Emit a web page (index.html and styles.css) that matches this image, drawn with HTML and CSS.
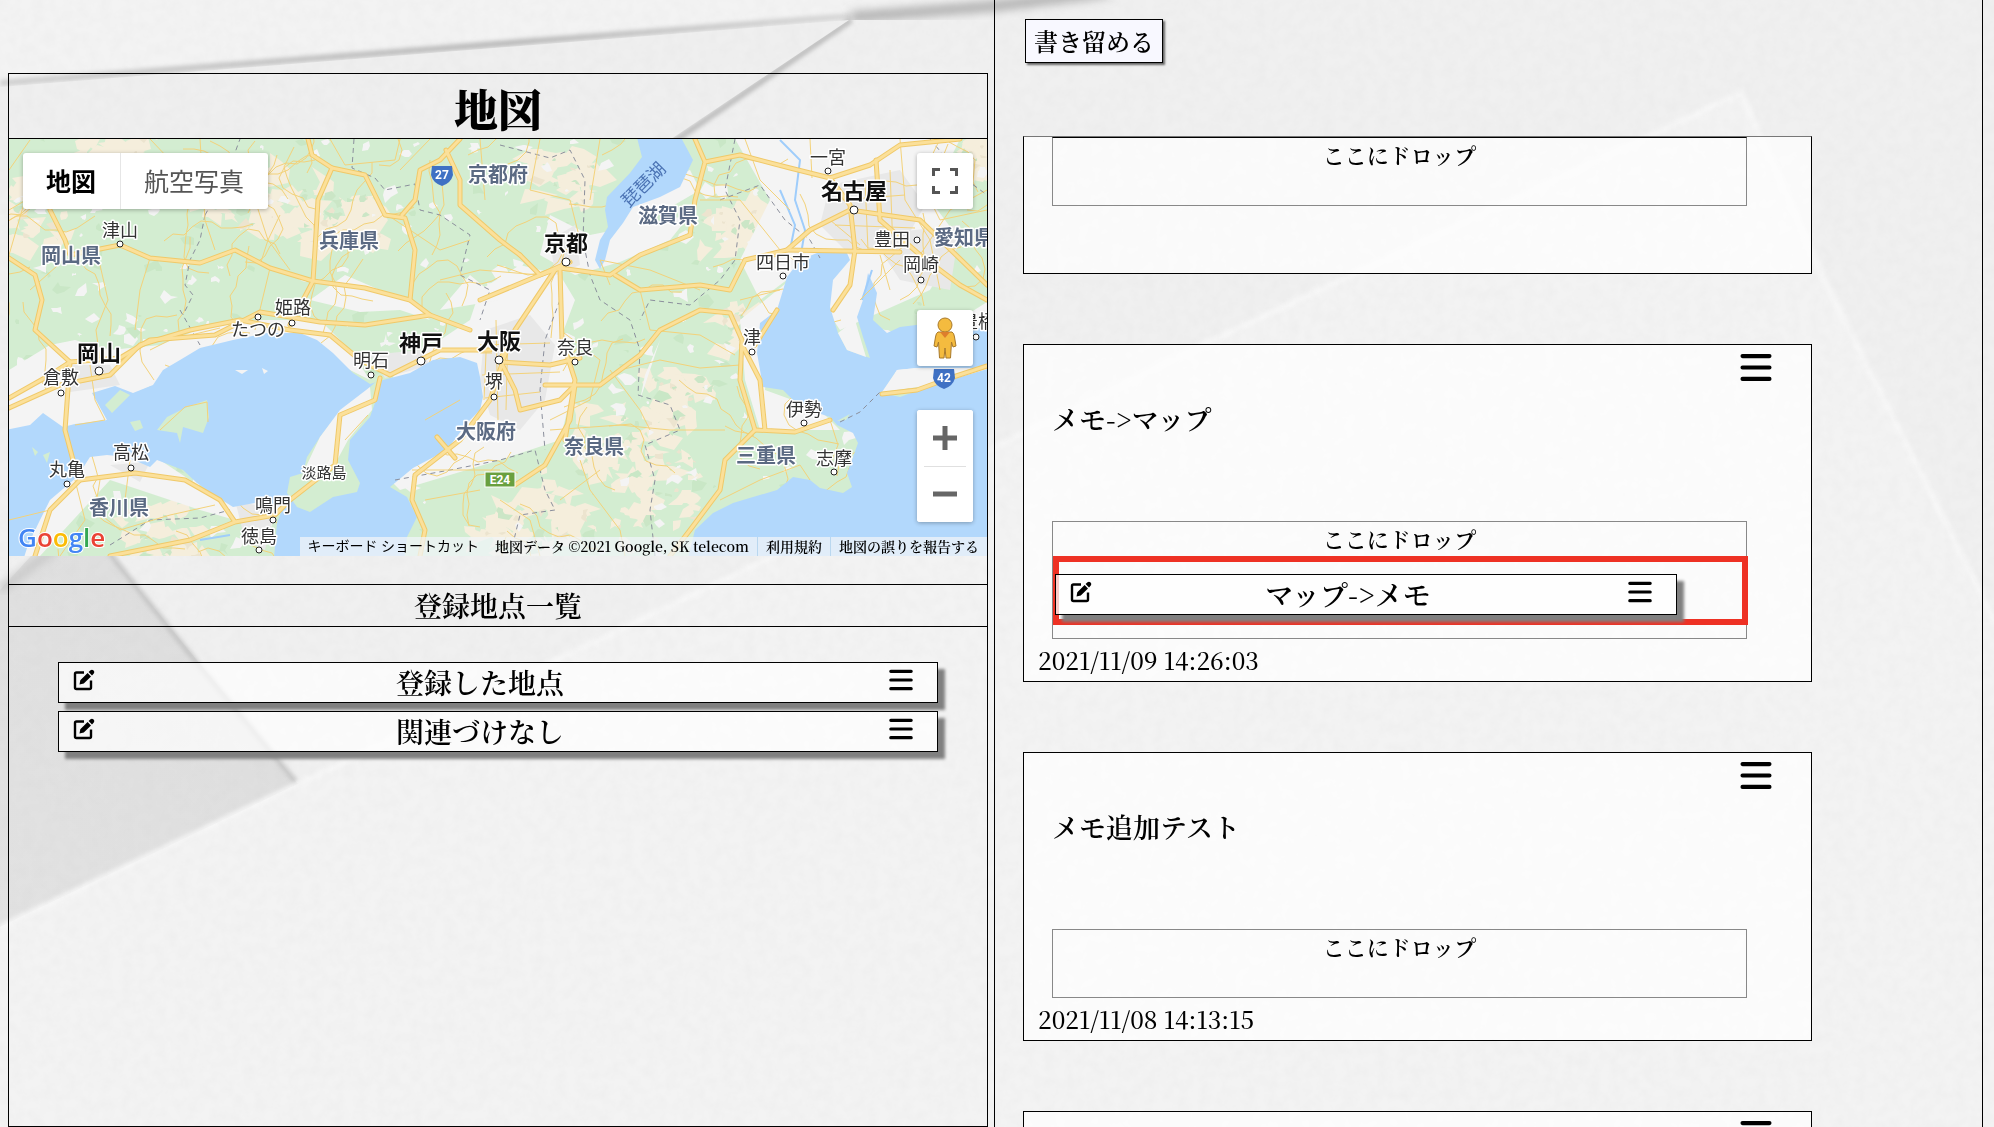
FILE: index.html
```html
<!DOCTYPE html>
<html lang="ja">
<head>
<meta charset="utf-8">
<title>地図メモ</title>
<link rel="stylesheet" href="styles.css">
</head>
<body>
<svg class="paper" viewBox="0 0 1994 1127" preserveAspectRatio="xMidYMid slice" aria-hidden="true">
  <defs>
    <filter id="soft"><feGaussianBlur stdDeviation="4"/></filter>
    <filter id="edge"><feGaussianBlur stdDeviation="2"/></filter>
    <filter id="grain" x="0" y="0" width="100%" height="100%">
      <feTurbulence type="fractalNoise" baseFrequency="0.09" numOctaves="3" seed="4"/>
      <feColorMatrix values="0 0 0 0 0.45  0 0 0 0 0.45  0 0 0 0 0.45  0.1 0 0 0 -0.03"/>
    </filter>
    <linearGradient id="fold" x1="0" y1="1" x2="1" y2="0"><stop offset="0" stop-color="#e2e2e2"/><stop offset=".6" stop-color="#dfdfdf"/><stop offset="1" stop-color="#d4d4d4"/></linearGradient>
    <linearGradient id="lip" x1="0" y1="0" x2="1" y2="0"><stop offset="0" stop-color="#d0d0d0"/><stop offset=".6" stop-color="#b8b8b8"/><stop offset="1" stop-color="#d8d8d8"/></linearGradient>
  </defs>
  <rect width="1994" height="1127" fill="#f3f3f3"/>
  <path d="M0 83 L851 16 L1120 0 H1994 V1127 H0Z" fill="#f0f0f0"/>
  <path d="M0 83 L255 63 L548 40 L851 16" fill="none" stroke="url(#lip)" stroke-width="6" filter="url(#edge)"/>
  <path d="M851 17 L995 6 L1110 -8" fill="none" stroke="#b4b4b4" stroke-width="11" filter="url(#soft)"/>
  <path d="M851 20 L676 140 L560 220" fill="none" stroke="#bdbdbd" stroke-width="6" filter="url(#edge)"/>
  <path d="M849 20 L674 137 L558 215 L0 215 V87Z" fill="#efefef"/>
  <path d="M82 500 L115 560 L298 784 L0 927 V590Z" fill="url(#fold)"/>
  <path d="M0 590 L60 545" stroke="#c8c8c8" stroke-width="8" filter="url(#soft)"/>
  <path d="M95 530 L115 560 L196 662 L296 782" fill="none" stroke="#c6c6c6" stroke-width="5" filter="url(#edge)"/>
  <path d="M0 927 L298 784 L765 560 L1215 339 L1741 93 L1824 279 L1994 620 V1127 H0Z" fill="#f3f3f3"/>
  <path d="M0 927 L298 784 L765 560 L1215 339 L1741 93 L1824 279 L1994 620" fill="none" stroke="#f8f8f8" stroke-width="5" filter="url(#edge)"/>
  <rect width="1994" height="1127" filter="url(#grain)"/>
</svg>

<svg width="0" height="0" class="sprite" aria-hidden="true">
  <symbol id="bars" viewBox="0 0 30 28"><path d="M2 3H28M2 14H28M2 25H28" stroke="#000" stroke-width="4" stroke-linecap="round"/></symbol>
  <symbol id="edit" viewBox="0 0 22 22">
    <path d="M11 3.500H3.500Q2 3.500 2 5V18.500Q2 20 3.500 20H16.500Q18 20 18 18.500V11.500" fill="none" stroke="#000" stroke-width="2.4"/>
    <path d="M6.500 15.500L7.300 11.200L14.600 4L18 7.400L10.800 14.600ZM15.600 3L17.500 1.200Q19 0 20.600 1.400Q22 3 20.800 4.500L19 6.400Z"/>
  </symbol>
</svg>

<main class="page">
  <section class="map-panel">
    <h1 class="map-title">地図</h1>
    <div class="map">
      <svg class="map-canvas" viewBox="9 139 978 417" preserveAspectRatio="xMidYMid slice" role="img" aria-label="関西周辺の地図">
        <rect x="0" y="130" width="1000" height="440" fill="#d3edd1"/>
        <g id="terrain"></g>
        <g fill="#f4f4f4">
          <path d="M9 370L50 345L75 340L110 350L160 345L210 325L260 320L320 320L350 350L370 380L300 345L230 350L120 400L100 430L60 440L9 440Z"/>
          <path d="M310 300L345 275L380 290L410 300L430 320L400 310L360 312Z"/>
          <path d="M395 365L440 340L470 320L480 290L520 265L560 275L575 300L560 340L575 380L560 440L500 460L400 490L380 470Z"/>
          <path d="M540 255L550 215L590 235L640 225L690 215L670 240L620 262L575 275Z"/>
          <path d="M600 240L640 190L690 170L700 190L640 225Z"/>
          <path d="M735 139H960L930 200L960 240L930 290L840 330L800 270L760 300L740 260L770 200Z"/>
          <path d="M740 320L790 280L770 330L765 390L820 410L840 430L760 430L745 380Z"/>
          <path d="M9 490L90 450L160 460L220 500L280 505L270 530L200 510L110 480L40 556H9Z"/>
          <path d="M640 400L660 340L645 375Z M470 275L500 300L440 310Z M880 370L990 300V390Z"/>
        </g>
        <g fill="#e8e8e8">
          <path d="M485 330L530 315L555 345L545 400L520 430L490 415L480 380Z M830 185L900 170L925 205L900 250L850 255L820 225Z M550 240L575 225L580 265L555 275Z M60 365L110 365L120 385L70 392Z M370 355L420 350L430 365L385 378Z M110 465L150 462L140 482Z M235 500L275 510L265 550L245 540Z M870 235L960 225L950 290L900 280Z"/>
        </g>
        <g id="byways" class="lane"></g>
        <g fill="#b2d8fc">
          <path d="M0 431L30 425L43 413L63 427L75 424L107 420L92 393L115 386L133 393L153 385L163 370L180 360L200 348L233 340L267 333L300 333L317 340L333 353L353 373L370 384L383 380L410 373L433 360L460 357L477 363L480 377L483 397L480 410L467 423L447 450L413 468L390 487L407 497L417 517L407 537L403 570L273 570L277 523L283 507L260 502L233 507L217 497L197 483L183 470L157 460L150 467L127 457L107 455L90 457L77 477L50 500L40 520L28 545L20 570L0 570Z"/>
          <path d="M787 277L800 260L817 253L847 253L850 260L833 280L830 307L838 333L847 350L870 358L863 337L857 317L863 300L868 273L877 293L873 320L887 333L900 327L940 322L990 330V368H917L897 370L882 393L900 397L933 385L1000 365V570H685L695 530L713 513L733 503L753 497L777 490L793 477L810 480L820 488L843 493L852 487L847 473L852 460L858 443L853 433L837 425L830 417L800 407L783 390L763 387L760 370L757 353L760 323L777 310Z"/>
          <path d="M635 130L642 157L630 173L607 197L605 210L608 227L600 240L595 260L600 269L605 260L610 240L623 223L633 207L660 197L680 187L693 160L677 130Z"/>
        </g>
        <g fill="#d3edd1">
          <path d="M157 430L167 417L187 407L207 400L209 417L203 433L183 427L180 443L177 433Z"/>
          <path d="M383 375L377 397L370 417L350 440L348 460L360 483L357 492L333 497L310 512L297 507L287 493L290 477L303 473L307 457L320 437L333 420L353 403L370 387Z"/>
          <path d="M130 422L140 420L143 428L135 431Z M32 447L38 452L35 456Z M43 455L50 452L47 463Z M105 405L120 390L130 395L112 413Z M837 421L850 414L846 420Z"/>
        </g>
        <path d="M370 387L372 410L348 440L335 464L303 473L320 437L340 410Z M882 392L897 370L917 368L990 368L933 385Z M235 370L248 370L242 374Z M262 368L268 371L264 374Z M838 333L855 320L866 357L847 350Z" fill="#f4f4f4"/>
        <path d="M780 140L800 160L795 200L805 230L800 260M780 190L795 225L790 250M872 270L862 300M200 540L230 535" fill="none" stroke="#9fcdfb" stroke-width="2"/>

        <g class="border-line">
          <path d="M205 215L200 240L190 260L185 285L193 295L183 315M205 215L225 180L240 139M354 139L352 168L375 178L385 190L415 184L420 210L440 215L470 235L460 275L490 290L480 320"/>
          <path d="M500 145L550 158L570 150L585 180L583 240L590 275L600 300L630 320L640 350L638 395L670 405L680 430L645 445L655 480L650 510L655 556"/>
          <path d="M735 139L725 190L740 220L735 260L720 280L690 305L650 300L640 320M720 200L760 185L785 220L810 240L820 258M930 139L960 175L987 195M395 480L450 470L500 460L535 450L545 490L555 510L520 515L510 556M180 310L200 345M110 545L150 520L200 518L230 510M840 422L860 412L880 392M560 300L545 340L540 390L545 450"/>
        </g>

        <g class="lane">
          <path d="M9 170L30 140M9 210L60 180L100 185M150 139L170 160L190 180L220 185M100 265L108 300L96 330L100 360M150 258L140 290L135 330M66 258L30 290M280 215L268 240L290 270M200 139L205 220L215 250M255 200L268 240L260 265M330 139L345 165L395 160L400 139M400 170L430 139M480 139L485 200M9 255L25 200M270 268L255 330"/>
          <path d="M540 139L530 190L570 200L580 240M600 139L590 200M745 139L760 180L790 210M700 200L740 200L780 250M610 285L600 260L650 270L700 290M440 280L480 270L540 275M470 240L440 250L380 210M560 330L600 360L590 400L550 420M620 370L660 360L700 368L740 365M620 425L670 430L725 430M550 430L620 425M610 370L640 410L650 430M580 460L590 490L620 530L625 556M500 500L530 520L540 556M640 290L650 330L700 335L735 355"/>
          <path d="M900 139L905 200L930 240L940 290M940 139L920 180L940 220L987 210M810 139L812 178M920 255L950 210L987 190M860 300L900 260M830 220L860 245M780 290L740 300M425 420L460 400M412 470L500 470M425 500L480 490M560 500L600 470M720 500L760 480L800 465L810 480M830 420L838 445L832 460M345 440L368 415"/>
          <path d="M160 430L185 407L207 402L208 422M100 480L95 510L120 530L170 515L215 505M75 480L85 520L60 556M130 460L125 500M9 520L50 510M150 350L170 340L220 328M90 365L95 400L105 420L75 425"/>
          <path d="M487 330L484 400M496 320L498 420M508 330L506 410M480 345L550 343M482 375L560 372M485 398L540 392M840 200L905 195M835 225L915 228M865 180L868 250M890 170L893 250M880 255L890 290"/>
        </g>
        <g id="roads">
          <path d="M9 258L35 275L42 300L35 330L70 362L65 430L73 460L80 480L50 510L35 556"/>
          <path d="M50 210L65 240L70 255L120 245L150 258L200 263L235 250L270 268L313 281L365 288L410 300L430 315L470 330"/>
          <path d="M9 408L60 385L110 375L140 345L190 330L240 320L290 330L330 335L360 360L390 375L440 350L490 350"/>
          <path d="M9 398L50 375L70 362L120 358L150 340L215 335L260 312L320 322L365 325L430 315"/>
          <path d="M308 139L312 155L332 168L318 200L315 250L313 281L290 325"/>
          <path d="M332 168L365 175L385 215L405 218L415 250L410 300M460 139L440 160L420 170L415 200L402 215M446 150L460 180L460 205L500 240L520 255"/>
          <path d="M520 255L540 275L560 268L610 275L640 255L690 235M615 275L640 290L700 285L730 290L745 260L787 250L810 230L850 210L920 220L987 285"/>
          <path d="M695 139L705 162L740 155L790 168L830 178L870 165L900 145L960 139M705 162L695 200L690 235"/>
          <path d="M830 178L850 205L855 250L850 285L833 310M876 160L880 220L920 255L960 285L987 300M787 250L900 252"/>
          <path d="M480 300L540 275L570 262M500 362L550 365L580 358M545 385L600 385L640 355L660 330L700 310L730 313L742 340L740 380L755 430L725 460L720 490L690 530L670 556"/>
          <path d="M755 430L795 432L830 420M742 345L760 380L765 430M777 310L755 345"/>
          <path d="M380 378L375 400L340 415L335 465L290 500L275 515L235 522L220 500L185 480L135 473L80 480M235 522L190 540L110 556"/>
          <path d="M555 270L515 330L500 360L515 390L520 410L560 400L575 385L570 420L545 465L515 485M510 340L490 400L460 440L415 475L412 500L425 530L420 556M560 270L562 340L575 380L565 440"/>
          <path d="M882 394L917 390L950 378L987 366M437 437L455 458"/>
        </g>
        <use href="#roads" class="road-casing"/>
        <use href="#roads" class="road"/>

        <g transform="translate(442 175)"><path d="M-10 -9H10L11 0Q9 8 0 11Q-9 8 -11 0Z" fill="#3f71c4"/><text class="shield" y="4">27</text></g>
        <g transform="translate(944 378)"><path d="M-10 -9H10L11 0Q9 8 0 11Q-9 8 -11 0Z" fill="#3f71c4"/><text class="shield" y="4">42</text></g>
        <g transform="translate(500 480)"><rect x="-15" y="-8" width="30" height="15" fill="#69a03f" stroke="#fff"/><text class="shield" y="4">E24</text></g>

        <g class="town-dot">
          <circle cx="120" cy="244" r="3"/><circle cx="258" cy="317" r="3"/><circle cx="292" cy="323" r="3"/><circle cx="61" cy="393" r="3"/><circle cx="371" cy="375" r="3"/><circle cx="494" cy="397" r="3"/><circle cx="575" cy="362" r="3"/><circle cx="828" cy="171" r="3"/><circle cx="917" cy="240" r="3"/><circle cx="921" cy="280" r="3"/><circle cx="783" cy="276" r="3"/><circle cx="752" cy="352" r="3"/><circle cx="804" cy="423" r="3"/><circle cx="834" cy="472" r="3"/><circle cx="67" cy="484" r="3"/><circle cx="131" cy="468" r="3"/><circle cx="273" cy="520" r="3"/><circle cx="259" cy="550" r="3"/><circle cx="976" cy="337" r="3"/>
          <circle cx="99" cy="371" r="4"/><circle cx="421" cy="361" r="4"/><circle cx="499" cy="360" r="4"/><circle cx="566" cy="262" r="4"/><circle cx="854" cy="210" r="4"/>
        </g>
        <g class="place town">
          <text x="120" y="237">津山</text><text x="293" y="314">姫路</text><text x="258" y="336">たつの</text><text x="61" y="384">倉敷</text><text x="371" y="367">明石</text><text x="494" y="388">堺</text><text x="575" y="354">奈良</text><text x="828" y="164">一宮</text><text x="892" y="246">豊田</text><text x="921" y="271">岡崎</text><text x="783" y="269">四日市</text><text x="752" y="344">津</text><text x="804" y="416">伊勢</text><text x="834" y="465">志摩</text><text x="67" y="476">丸亀</text><text x="131" y="459">高松</text><text x="273" y="512">鳴門</text><text x="259" y="543">徳島</text><text x="978" y="328">豊橋</text>
          <text class="island" x="324" y="478">淡路島</text>
        </g>
        <g class="place pref">
          <text x="71" y="263">岡山県</text><text x="349" y="248">兵庫県</text><text x="498" y="182">京都府</text><text x="668" y="223">滋賀県</text><text x="964" y="245">愛知県</text><text x="486" y="439">大阪府</text><text x="594" y="454">奈良県</text><text x="766" y="463">三重県</text><text x="119" y="515">香川県</text>
        </g>
        <g class="place city">
          <text x="99" y="361">岡山</text><text x="421" y="351">神戸</text><text x="499" y="349">大阪</text><text x="566" y="251">京都</text><text x="854" y="199">名古屋</text>
        </g>
        <text class="lake" transform="translate(648 189) rotate(-45)">琵琶湖</text>
        <text class="brand" x="18" y="547"><tspan fill="#4285f4">G</tspan><tspan fill="#ea4335">o</tspan><tspan fill="#fbbc05">o</tspan><tspan fill="#4285f4">g</tspan><tspan fill="#34a853">l</tspan><tspan fill="#ea4335">e</tspan></text>
      </svg>

      <div class="map-types">
        <button type="button" class="map-type is-active">地図</button>
        <button type="button" class="map-type">航空写真</button>
      </div>
      <div class="map-tools">
        <button type="button" class="tool" aria-label="全画面表示">
          <svg width="26" height="26" viewBox="0 0 26 26"><path d="M1.500 8V1.500H8M18 1.500H24.500V8M24.500 18V24.500H18M8 24.500H1.500V18" fill="none" stroke="#555" stroke-width="3"/></svg>
        </button>
        <button type="button" class="tool pegman" aria-label="ストリートビュー">
          <svg width="24" height="42" viewBox="0 0 24 42"><g fill="#f4bb3f" stroke="#a8792a" stroke-width="1"><path d="M5 15H19Q21 16 21.500 20L23 29L20 30L18.500 25L17.500 41H13L12 31L11 41H6.500L5.500 25L4 30L1 29L2.500 20Q3 16 5 15Z"/><circle cx="12" cy="8" r="7"/></g><path d="M7 15H17L12 21Z" fill="#dd7e2c"/></svg>
        </button>
        <div class="zoom">
          <button type="button" class="tool" aria-label="拡大"><svg width="26" height="26" viewBox="0 0 26 26"><path d="M13 1V25M1 13H25" stroke="#666" stroke-width="5"/></svg></button>
          <button type="button" class="tool" aria-label="縮小"><svg width="26" height="26" viewBox="0 0 26 26"><path d="M1 13H25" stroke="#666" stroke-width="5"/></svg></button>
        </div>
      </div>
      <div class="credits">
        <button type="button" class="credit shortcuts">キーボード ショートカット</button>
        <span class="credit data">地図データ ©2021 Google, SK telecom</span>
        <a class="credit" href="#terms">利用規約</a>
        <a class="credit" href="#report">地図の誤りを報告する</a>
      </div>
    </div>

    <h2 class="list-title">登録地点一覧</h2>
    <ul class="places">
      <li class="spot"><button type="button" class="icon-button" aria-label="編集"><svg class="edit"><use href="#edit"/></svg></button><span class="spot-name">登録した地点</span><button type="button" class="icon-button" aria-label="並べ替え"><svg class="handle"><use href="#bars"/></svg></button></li>
      <li class="spot"><button type="button" class="icon-button" aria-label="編集"><svg class="edit"><use href="#edit"/></svg></button><span class="spot-name">関連づけなし</span><button type="button" class="icon-button" aria-label="並べ替え"><svg class="handle"><use href="#bars"/></svg></button></li>
    </ul>
  </section>

  <section class="memo-panel">
    <button type="button" class="write">書き留める</button>
    <div class="memos">
      <article class="memo is-clipped">
        <div class="drop"><p class="drop-label">ここにドロップ</p></div>
      </article>
      <article class="memo">
        <div class="memo-head"><button type="button" class="icon-button" aria-label="メニュー"><svg class="menu"><use href="#bars"/></svg></button></div>
        <p class="memo-text">メモ-&gt;マップ</p>
        <div class="drop">
          <p class="drop-label">ここにドロップ</p>
          <div class="slot">
            <div class="spot"><button type="button" class="icon-button" aria-label="編集"><svg class="edit"><use href="#edit"/></svg></button><span class="spot-name">マップ-&gt;メモ</span><button type="button" class="icon-button" aria-label="並べ替え"><svg class="handle"><use href="#bars"/></svg></button></div>
          </div>
        </div>
        <time class="memo-date">2021/11/09 14:26:03</time>
      </article>
      <article class="memo">
        <div class="memo-head"><button type="button" class="icon-button" aria-label="メニュー"><svg class="menu"><use href="#bars"/></svg></button></div>
        <p class="memo-text">メモ追加テスト</p>
        <div class="drop"><p class="drop-label">ここにドロップ</p></div>
        <time class="memo-date">2021/11/08 14:13:15</time>
      </article>
      <article class="memo">
        <div class="memo-head"><button type="button" class="icon-button" aria-label="メニュー"><svg class="menu"><use href="#bars"/></svg></button></div>
      </article>
    </div>
  </section>
</main>
<script src="terrain.js"></script>
</body>
</html>
```
FILE: terrain.js
```js
// Scatter small angular patches of hills and fields over the land.
(function () {
  var seed = 7;
  function rand() { seed = (seed * 16807) % 2147483647; return seed / 2147483647; }
  var hills = [[30, 215, 40], [290, 215, 45], [240, 200, 40], [120, 150, 40], [345, 220, 35], [560, 180, 35], [730, 230, 30], [640, 480, 60], [600, 510, 60], [680, 400, 35], [620, 440, 40], [510, 530, 40], [160, 540, 40], [740, 330, 30], [975, 160, 20]];
  var out = '';
  function patch(x, y, size, color) {
    var n = 5 + Math.floor(rand() * 4), pts = [];
    for (var i = 0; i < n; i++) {
      var a = i / n * 6.28, r = size * (0.2 + rand() * 1.2);
      pts.push(Math.round(x + Math.cos(a) * r) + ',' + Math.round(y + Math.sin(a) * r * 0.8));
    }
    out += '<polygon points="' + pts.join(' ') + '" fill="' + color + '"/>';
  }
  hills.forEach(function (h) {
    for (var i = 0; i < 24; i++) patch(h[0] + (rand() - 0.5) * 2 * h[2], h[1] + (rand() - 0.5) * 1.6 * h[2], 5 + rand() * 14, '#f5eedc');
    for (i = 0; i < 10; i++) patch(h[0] + (rand() - 0.5) * 2 * h[2], h[1] + (rand() - 0.5) * 1.4 * h[2], 2 + rand() * 5, rand() > 0.5 ? '#ece4cf' : '#cbe6c6');
  });
  for (var i = 0; i < 400; i++) patch(rand() * 990, 139 + rand() * 417, 2 + rand() * 8, rand() > 0.35 ? '#f4f4f4' : '#c9e7c6');
  document.getElementById('terrain').innerHTML = out;

  // Minor roads wander across the country between the highways.
  var lanes = '';
  for (i = 0; i < 100; i++) {
    var x = rand() * 990, y = 139 + rand() * 417, a = rand() * 6.28;
    lanes += 'M' + Math.round(x) + ' ' + Math.round(y);
    for (var j = 0; j < 9; j++) {
      a += (rand() - 0.5) * 1.6;
      x += Math.cos(a) * 11;
      y += Math.sin(a) * 11;
      lanes += 'L' + Math.round(x) + ' ' + Math.round(y);
    }
  }
  document.getElementById('byways').innerHTML = '<path d="' + lanes + '"/>';
})();
```
FILE: styles.css
```css
* { box-sizing: border-box; }

body {
  margin: 0;
  color: #000;
  background: #efefef;
  font-family: "Noto Serif CJK JP", "Liberation Serif", "Noto Sans CJK JP", serif;
}

button {
  margin: 0;
  padding: 0;
  border: 0;
  color: inherit;
  background: none;
  font: inherit;
  cursor: pointer;
}

h1, h2, p, ul { margin: 0; padding: 0; }
svg { display: block; }

.paper { position: fixed; inset: 0; width: 100%; height: 100%; z-index: -1; }
.sprite { position: absolute; }

.page {
  display: grid;
  grid-template-columns: 980fr 989fr;
  gap: 6px;
  height: 100vh;
  padding: 0 11px 0 8px;
}

/* Map side */
.map-panel { min-width: 0; margin-top: 73px; border: 1px solid #000; }
.map-title {
  padding-top: 4px;
  border-bottom: 1px solid #000;
  font-size: 44px;
  line-height: 60px;
  font-weight: 900;
  text-align: center;
}
.map { position: relative; height: 417px; overflow: hidden; font-family: Roboto, "Noto Sans CJK JP", sans-serif; }
.map-canvas { width: 100%; height: 100%; }

.border-line path { fill: none; stroke: #8b8f9c; stroke-width: 1; stroke-dasharray: 5 4; }
#roads { fill: none; stroke-linejoin: round; stroke-linecap: round; }
.road-casing { stroke: #f0c969; stroke-width: 5; }
.road { stroke: #fbe09a; stroke-width: 3; }
.lane path { fill: none; stroke: #f3d27a; stroke-width: 1; stroke-linejoin: round; }
.shield { fill: #fff; font: 700 12px Roboto, sans-serif; text-anchor: middle; }
.town-dot circle { fill: #fff; stroke: #222; stroke-width: 1; }
.place { text-anchor: middle; paint-order: stroke; stroke: #fff; stroke-width: 3px; stroke-linejoin: round; }
.town { fill: #333; font-size: 18px; }
.island { font-size: 15px; }
.pref { fill: #5b6a83; font-size: 20px; font-weight: 700; }
.city { fill: #111; font-size: 22px; font-weight: 700; }
.lake { fill: #4b73b4; font-size: 18px; text-anchor: middle; }
.brand { font: 600 26px "Open Sans", sans-serif; paint-order: stroke; stroke: #fff; stroke-width: 2px; }

.map-types, .tool, .zoom { border-radius: 3px; background: #fff; box-shadow: 0 1px 4px rgba(0, 0, 0, .3); }
.map-types { position: absolute; top: 14px; left: 14px; display: flex; }
.map-type { height: 56px; padding: 0 24px 2px 23px; color: #555; font-size: 25px; }
.map-type.is-active { border-right: 1px solid #e6e6e6; color: #000; font-weight: 700; }
.map-tools { position: absolute; top: 14px; right: 14px; display: flex; flex-direction: column; }
.tool { display: flex; align-items: center; justify-content: center; width: 56px; height: 56px; }
.pegman { margin: 101px 0 44px; }
.zoom .tool { box-shadow: none; }
.zoom .tool + .tool::before { content: ""; position: absolute; width: 42px; margin-bottom: 56px; border-top: 1px solid #e0e0e0; }

.credits {
  position: absolute;
  right: 0;
  bottom: 0;
  display: flex;
  font-size: 14px;
  line-height: 19px;
}
.credit {
  padding: 0 8px;
  border-left: 1px solid #b9d7ef;
  background: rgba(240, 244, 248, .75);
  color: #000;
  font-family: "Noto Serif CJK JP", "Liberation Serif", serif;
  font-weight: 600;
  text-decoration: none;
  white-space: nowrap;
}
.credit.shortcuts { border-left: 0; font-family: Roboto, "Noto Sans CJK JP", sans-serif; font-weight: 400; }
.credit.data { padding: 0 8px; border-left: 0; }

.list-title {
  margin-top: 28px;
  border: solid #000;
  border-width: 1px 0;
  font-size: 28px;
  line-height: 41px;
  font-weight: 600;
  text-align: center;
}
.places { display: grid; gap: 8px; padding: 35px 49px 0; list-style: none; }
.spot {
  display: flex;
  align-items: center;
  height: 41px;
  padding: 0 23px 0 14px;
  border: 1px solid #000;
  background: rgba(255, 255, 255, .7);
  box-shadow: 7px 7px 3px #808080;
}
.spot-name { flex: 1; margin: 0 23px 2px 0; font-size: 28px; line-height: 36px; font-weight: 600; text-align: center; }
.edit { width: 22px; height: 22px; }
.handle { width: 26px; height: 22px; }
.spot .icon-button { margin-bottom: 5px; }

/* Memo side */
.memo-panel {
  display: flex;
  flex-direction: column;
  align-items: flex-start;
  min-width: 0;
  height: 100vh;
  padding: 19px 0 0 28px;
  border: solid #000;
  border-width: 0 1px;
}
.write {
  flex: none;
  height: 44px;
  margin: 0 0 73px 2px;
  padding: 0 8px;
  border: 1px solid #000;
  background: #f8f8ff;
  box-shadow: 2px 2px 2px #666;
  font-size: 24px;
  line-height: 40px;
  font-weight: 600;
}
.memos {
  display: flex;
  flex: 1;
  flex-direction: column;
  gap: 70px;
  width: calc(100% - 170px);
  min-height: 0;
  overflow: auto;
  scrollbar-width: none;
}
.memo { flex: none; border: 1px solid #000; background: rgba(255, 255, 255, .7); }
.memo.is-clipped { padding-bottom: 67px; border-top-color: #777; }
.is-clipped .drop { border-top-color: #000; }
.memo-head { display: flex; align-items: flex-start; justify-content: flex-end; height: 48px; padding: 8px 39px 0 0; }
.menu { width: 32px; height: 29px; }
.memo-text { min-height: 128px; padding: 7px 28px 0; font-size: 27px; line-height: 38px; font-weight: 600; }
.drop { min-height: 69px; margin: 0 64px 0 28px; border: 1px solid #888; }
.drop-label { font-size: 22px; line-height: 34px; font-weight: 600; text-align: center; }
.slot { position: relative; margin: 0 -2px 13px 0; padding: 18px 71px 10px 2px; }
.slot::before { content: ""; position: absolute; inset: 0; border: 6px solid #ee3124; }
.slot .spot { position: relative; background: rgba(255, 255, 255, .75); }
.memo-date { display: block; padding: 0 14px; font-size: 24px; line-height: 42px; font-weight: 500; }
```
